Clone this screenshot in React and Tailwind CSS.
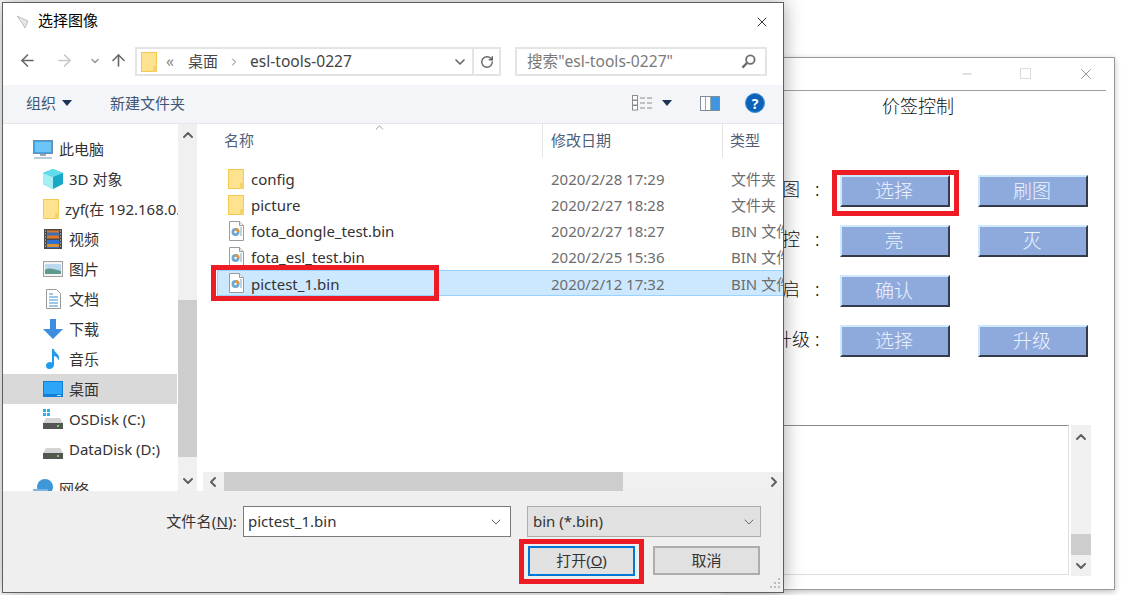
import React from 'react';
import { ChevronDown, ChevronUp, ChevronLeft, ChevronRight, ArrowLeft, ArrowRight, ArrowUp, RotateCw, X, Minus } from 'lucide-react';

const FolderIcon = ({ className = 'w-4 h-5' }) => (
  <svg viewBox="0 0 16 20" className={className}>
    <rect x="0.5" y="0.5" width="15" height="19" fill="#fde28f" stroke="#f3c94f" />
    <path d="M12 20v-6h4v6z" fill="#f6d06a" />
  </svg>
);

const BinIcon = () => (
  <svg viewBox="0 0 15 20" className="w-[15px] h-5 shrink-0">
    <path d="M.5.5h10l4 4v15H.5z" fill="#fff" stroke="#9a9a9a" />
    <path d="M10.5.5v4h4" fill="#eee" stroke="#9a9a9a" />
    <circle cx="6.5" cy="11" r="4" fill="#6fa8d0" />
    <path d="M6.5 7a4 4 0 0 1 4 4H6.5z" fill="#e0953f" />
    <circle cx="6.5" cy="11" r="1.2" fill="#fff" />
    <path d="M12 6v9" stroke="#7fa5bd" />
  </svg>
);

const PcIcon = () => (
  <svg viewBox="0 0 20 20" className="w-5 h-5">
    <rect x="0.5" y="1.5" width="19" height="13" fill="#3aa7ee" stroke="#6f8ea8" />
    <rect x="2" y="3" width="16" height="10" fill="#6cc5f7" />
    <path d="M7 15h6v2H7z" fill="#9ab" />
    <path d="M1 18h18v2H1z" fill="#bccbd8" />
  </svg>
);
const CubeIcon = () => (
  <svg viewBox="0 0 20 20" className="w-5 h-5">
    <path d="M10 0l10 4v11l-10 5L0 15V4z" fill="#18a9c9" />
    <path d="M10 0l10 4-10 4L0 4z" fill="#5fdcea" />
    <path d="M0 4l10 4v12L0 15z" fill="#a5eef3" />
  </svg>
);
const FilmIcon = () => (
  <svg viewBox="0 0 18 20" className="w-[18px] h-5">
    <rect width="18" height="20" fill="#4a4a4a" />
    <rect x="3" y="1.5" width="12" height="8" fill="#d9792e" />
    <rect x="3" y="3.5" width="12" height="3" fill="#3f6fb5" />
    <rect x="3" y="11" width="12" height="8" fill="#2f6fd0" />
    <rect x="3" y="15" width="12" height="3" fill="#d9902e" />
    <path d="M1 2h1M1 5h1M1 8h1M1 11h1M1 14h1M1 17h1M16 2h1M16 5h1M16 8h1M16 11h1M16 14h1M16 17h1" stroke="#ddd" />
  </svg>
);
const PictureIcon = () => (
  <svg viewBox="0 0 20 16" className="w-5 h-4">
    <rect x="0.5" y="0.5" width="19" height="15" fill="#f4f4f4" stroke="#a0a0a0" />
    <rect x="2" y="3" width="16" height="10" fill="#bcd8ee" />
    <path d="M2 9c4-3 8-1 16 1v3H2z" fill="#5f9a8c" />
  </svg>
);
const DocIcon = () => (
  <svg viewBox="0 0 15 20" className="w-[15px] h-5">
    <path d="M.5.5h10l4 4v15H.5z" fill="#fff" stroke="#9a9a9a" />
    <path d="M3 5h4M3 8h9M3 11h9M3 14h9M3 17h9" stroke="#3d8fd8" />
  </svg>
);
const DownloadIcon = () => (
  <svg viewBox="0 0 20 20" className="w-5 h-5">
    <path d="M7 0h6v10h7L10 20 0 10h7z" fill="#3d8ee0" />
  </svg>
);
const MusicIcon = () => (
  <svg viewBox="0 0 16 20" className="w-4 h-5">
    <path d="M7 0h2c0 4 5 4 5 9 0 1-.5 2-1 2.500 0-3-2-4-4-4.500V16c0 2-2 4-4.500 4S1 18.500 1 16.500 3 13 5 13c.8 0 1.500.2 2 .5z" fill="#1f9bee" />
  </svg>
);
const DesktopIcon = () => (
  <svg viewBox="0 0 20 16" className="w-5 h-4">
    <rect width="20" height="16" fill="#0f7fd8" />
    <rect x="1" y="1" width="18" height="12" fill="#2ea6f7" />
    <rect x="14" y="14" width="4" height="1" fill="#bfe3fb" />
  </svg>
);
const DriveIcon = ({ win }) => (
  <svg viewBox="0 0 20 20" className="w-5 h-5">
    {win && <path d="M0 0h3v3H0zM4 0h3v3H4zM0 4h3v3H0zM4 4h3v3H4z" fill="#21b5ee" />}
    <path d="M3 9h14l3 5H0z" fill="#d4d4d4" />
    <rect y="14" width="20" height="6" fill="#555" />
    <rect x="14" y="16" width="2" height="2" fill="#6fdc5a" />
  </svg>
);
const NetworkIcon = () => (
  <svg viewBox="0 0 20 20" className="w-5 h-5">
    <circle cx="12" cy="8" r="8" fill="#3d97d8" />
    <rect y="10" width="15" height="10" fill="#7cb6e0" />
  </svg>
);

const treeRows = [
  { label: '此电脑', icon: <PcIcon />, top: true },
  { label: '3D 对象', icon: <CubeIcon /> },
  { label: 'zyf(在 192.168.0.1)', icon: <FolderIcon /> },
  { label: '视频', icon: <FilmIcon /> },
  { label: '图片', icon: <PictureIcon /> },
  { label: '文档', icon: <DocIcon /> },
  { label: '下载', icon: <DownloadIcon /> },
  { label: '音乐', icon: <MusicIcon /> },
  { label: '桌面', icon: <DesktopIcon />, active: true },
  { label: 'OSDisk (C:)', icon: <DriveIcon win /> },
  { label: 'DataDisk (D:)', icon: <DriveIcon /> },
];

const files = [
  { name: 'config', date: '2020/2/28 17:29', type: '文件夹', folder: true },
  { name: 'picture', date: '2020/2/27 18:28', type: '文件夹', folder: true },
  { name: 'fota_dongle_test.bin', date: '2020/2/27 18:27', type: 'BIN 文件' },
  { name: 'fota_esl_test.bin', date: '2020/2/25 15:36', type: 'BIN 文件' },
  { name: 'pictest_1.bin', date: '2020/2/12 17:32', type: 'BIN 文件', selected: true },
];

const panelRows = [
  { label: '刷图', left: '选择', right: '刷图', colon: 'w-[40px] pl-[15px]' },
  { label: '灯控', left: '亮', right: '灭', colon: 'w-[40px] pl-[15px]' },
  { label: '重启', left: '确认', colon: 'w-[40px] pl-[15px]' },
  { label: '固件升级', left: '选择', right: '升级', colon: 'w-[30px] pl-[5px]' },
];

function PanelButton({ children }) {
  return (
    <div className="w-[110px] h-[32px] flex items-center justify-center pb-[2px] pr-[2px] bg-[#8eaadc] border-t-2 border-l-2 border-t-[#cfe9fb] border-l-[#cfe9fb] border-r-2 border-b-2 border-r-[#333b4c] border-b-[#333b4c] text-[19px] font-light text-[#edf3ff]">
      {children}
    </div>
  );
}

function ControlWindow() {
  return (
    <div className="absolute left-[721px] top-[57px] w-[394px] h-[533px] flex flex-col bg-white border border-[#9a9a9a] shadow-[0_2px_6px_rgba(0,0,0,0.25)] font-['Noto_Sans_CJK_SC',sans-serif] text-[#111]">
      <div className="h-[33px] shrink-0 relative border-b border-[#a0a0a0] mr-[8px] text-[#9a9a9a]">
        <Minus className="absolute left-[238px] top-[9px] w-[14px] h-[14px]" strokeWidth={1} />
        <div className="absolute left-[298px] top-[10px] w-[11px] h-[11px] border border-[#dcdcdc]" />
        <X className="absolute left-[355px] top-[7px] w-[18px] h-[18px] text-[#777]" strokeWidth={1} />
      </div>
      <div className="h-[31px] text-center text-[18px] leading-[29px] font-light">价签控制</div>
      <div className="mt-[53px] flex flex-col gap-[18px]">
        {panelRows.map((row) => (
          <div key={row.label + row.left} className="flex items-center">
            <div className="w-[118px] -mt-[6px] flex justify-end text-[18px] font-light">
              <span className="whitespace-nowrap">{row.label}</span>
              <span className={row.colon}>:</span>
            </div>
            <PanelButton>{row.left}</PanelButton>
            {row.right && (
              <div className="ml-[28px]">
                <PanelButton>{row.right}</PanelButton>
              </div>
            )}
          </div>
        ))}
      </div>
      <div className="mt-[68px] ml-[10px] flex gap-[2px]">
        <div className="w-[337px] h-[150px] bg-white border border-[#dedede] border-t-[#8a8a8a]" />
        <div className="w-[20px] h-[151px] bg-[#f0f0f0] flex flex-col items-center text-[#606060]">
          <ChevronUp className="w-4 h-5 mt-[2px]" strokeWidth={3} />
          <div className="w-full h-[21px] mt-[87px] bg-[#cdcdcd]" />
          <ChevronDown className="w-4 h-5 mt-[1px]" strokeWidth={3} />
        </div>
      </div>
    </div>
  );
}

function AddressBar() {
  return (
    <div className="h-[44px] shrink-0 flex items-start pt-[6px] text-[#444]">
      <ArrowLeft className="ml-[15px] mt-[4px] w-[19px] h-[19px] text-[#666]" strokeWidth={2} />
      <ArrowRight className="ml-[18px] mt-[4px] w-[19px] h-[19px] text-[#c8c8c8]" strokeWidth={2} />
      <ChevronDown className="ml-[15px] mt-[8px] w-3 h-3 text-[#999]" strokeWidth={3} />
      <ArrowUp className="ml-[8px] mt-[4px] w-[19px] h-[19px] text-[#666]" strokeWidth={2} />
      <div className="ml-[7px] w-[366px] h-[29px] flex items-center border-2 border-[#e4e4e4] text-[15.6px]">
        <div className="ml-[4px] flex">
          <FolderIcon />
        </div>
        <span className="ml-[9px] text-[#888]">«</span>
        <span className="ml-[14px] text-[15px]">桌面</span>
        <ChevronRight className="ml-[10px] w-3 h-3 text-[#777]" strokeWidth={2} />
        <span className="ml-[10px] whitespace-nowrap">esl-tools-0227</span>
        <ChevronDown className="ml-auto mr-[4px] w-4 h-4 text-[#666]" strokeWidth={2.5} />
        <div className="w-[27px] h-full flex items-center justify-center border-l-2 border-[#e4e4e4]">
          <RotateCw className="w-[14px] h-[14px] text-[#666]" strokeWidth={2.5} />
        </div>
      </div>
      <div className="ml-[14px] w-[252px] h-[29px] flex items-center border-2 border-[#e4e4e4] pl-[10px] text-[15.6px] text-[#7a7a7a]">
        <span className="whitespace-nowrap">搜索"esl-tools-0227"</span>
        <svg viewBox="0 0 16 16" className="ml-auto mr-[9px] w-[15px] h-[15px]" fill="none" stroke="#6e6e6e" strokeWidth="2">
          <circle cx="10" cy="6" r="4.5" />
          <path d="M6.5 9.5L1.5 14.5" strokeWidth="2.5" />
        </svg>
      </div>
    </div>
  );
}

function Toolbar() {
  return (
    <div className="h-[39px] shrink-0 flex items-center pb-[2px] bg-[#f3f5f8] border-b border-[#e6e6e6] text-[15px] text-[#3f5674]">
      <span className="ml-[23px]">组织</span>
      <div className="ml-[6px] w-0 h-0 border-x-[5px] border-x-transparent border-t-[6px] border-t-[#1c3557]" />
      <span className="ml-[38px]">新建文件夹</span>
      <svg viewBox="0 0 21 16" className="ml-auto w-[21px] h-4" stroke="#8c8c8c">
        <rect x="0.5" y="0.5" width="5" height="4.5" fill="#fff" />
        <rect x="0.5" y="5.5" width="5" height="4.5" fill="#fff" />
        <rect x="0.5" y="10.5" width="5" height="4.5" fill="#fff" />
        <path d="M8 3h5M15 3h5M8 8h5M15 8h5M8 13h5M15 13h5" />
      </svg>
      <div className="ml-[9px] w-0 h-0 border-x-[5px] border-x-transparent border-t-[6px] border-t-[#1c3557]" />
      <div className="ml-[28px] w-5 h-[15px] flex border border-[#7f8c99] bg-white">
        <div className="flex-1 border-r border-[#9aa]" />
        <div className="flex-1 border-r border-[#9aa]" />
        <div className="w-[8px] bg-[#3f95e0]" />
      </div>
      <div className="ml-[25px] mr-[18px] w-5 h-5 rounded-full bg-[#0a63b9] border border-[#3f8fd8] flex items-center justify-center text-[14px] font-bold text-white">?</div>
    </div>
  );
}

function Sidebar() {
  return (
    <div className="w-[175px] shrink-0 pt-[10px] overflow-hidden text-[15px] text-[#333]">
      {treeRows.map((row) => (
        <div key={row.label} className={`h-[30px] flex items-center ${row.active ? 'bg-[#d9d9d9] mr-px' : ''}`}>
          <div className={`w-5 flex justify-center ${row.top ? 'ml-[30px]' : 'ml-[40px]'}`}>{row.icon}</div>
          <span className="ml-[6px] whitespace-nowrap">{row.label}</span>
        </div>
      ))}
      <div className="h-[30px] mt-[10px] flex items-center">
        <div className="ml-[30px] w-5 flex justify-center">
          <NetworkIcon />
        </div>
        <span className="ml-[6px]">网络</span>
      </div>
    </div>
  );
}

function SideScrollbar() {
  return (
    <div className="w-[19px] shrink-0 bg-[#f0f0f0] flex flex-col items-center text-[#606060]">
      <ChevronUp className="w-4 h-4 mt-[3px]" strokeWidth={3} />
      <div className="w-full h-[157px] mt-[157px] bg-[#cdcdcd]" />
      <ChevronDown className="w-4 h-4 mt-[16px]" strokeWidth={3} />
    </div>
  );
}

function FileList() {
  return (
    <div className="ml-[6px] flex-1 min-w-0 flex flex-col overflow-hidden">
      <div className="h-[34px] shrink-0 flex relative text-[15px] text-[#4f6078]">
        <ChevronUp className="absolute left-[170px] -top-[3px] w-[13px] h-[13px] text-[#888]" strokeWidth={1.5} />
        <div className="w-[339px] pl-[21px] pt-[5px]">名称</div>
        <div className="w-[180px] pl-[8px] pt-[5px] border-l border-[#e5e5e5]">修改日期</div>
        <div className="pl-[7px] pt-[5px] border-l border-[#e5e5e5] whitespace-nowrap">类型</div>
      </div>
      <div className="flex-1 pt-[8px] pl-[14px] text-[15px]">
        {files.map((file) => (
          <div
            key={file.name}
            className={`h-[26px] w-[620px] flex items-center border ${file.selected ? 'bg-[#cce8ff] border-[#99d1ff]' : 'border-transparent'}`}
          >
            <div className="ml-[10px] w-4 flex justify-center">{file.folder ? <FolderIcon /> : <BinIcon />}</div>
            <div className={`flex items-center ${file.selected ? 'mt-[2px]' : ''}`}>
              <span className="ml-[7px] w-[300px] text-[#333] whitespace-nowrap">{file.name}</span>
              <span className="w-[180px] text-[#6d6d6d] whitespace-nowrap">{file.date}</span>
              <span className="text-[#6d6d6d] whitespace-nowrap">{file.type}</span>
            </div>
          </div>
        ))}
      </div>
      <div className="h-[19px] shrink-0 flex items-center bg-[#f0f0f0] text-[#606060]">
        <ChevronLeft className="w-4 h-4 ml-[2px]" strokeWidth={3} />
        <div className="ml-[3px] w-[399px] h-full bg-[#cdcdcd]" />
        <ChevronRight className="ml-auto w-4 h-4 mr-[1px]" strokeWidth={3} />
      </div>
    </div>
  );
}

function Footer() {
  return (
    <div className="flex-1 bg-[#efefef] relative text-[15px] text-[#333]">
      <div className="flex items-center pt-[15px]">
        <div className="w-[234px] text-right whitespace-nowrap tracking-[0.2px]">
          文件名(<span className="underline">N</span>):
        </div>
        <div className="ml-[6px] w-[268px] h-[31px] flex items-center justify-between bg-white border border-[#7a7a7a] pl-[4px] pr-[6px]">
          <span>pictest_1.bin</span>
          <ChevronDown className="w-4 h-4 text-[#666]" strokeWidth={1.5} />
        </div>
        <div className="ml-[16px] w-[234px] h-[31px] flex items-center justify-between bg-[#e1e1e1] border border-[#adadad] pl-[5px] pr-[3px]">
          <span>bin (*.bin)</span>
          <ChevronDown className="w-4 h-4 text-[#666]" strokeWidth={1.5} />
        </div>
      </div>
      <div className="flex justify-end gap-[18px] pr-[23px] mt-[9px]">
        <div className="w-[107px] h-[30px] flex items-center justify-center pb-[2px] bg-[#e1e1e1] border-2 border-[#0078d7]">
          打开(<span className="underline">O</span>)
        </div>
        <div className="w-[107px] h-[29px] flex items-center justify-center pb-[1px] bg-[#e1e1e1] border-2 border-[#adadad]">取消</div>
      </div>
      <svg viewBox="0 0 12 12" className="absolute right-[2px] bottom-[2px] w-3 h-3" fill="#bdbdbd">
        <path d="M9 0h2v2H9zM5 4h2v2H5zM9 4h2v2H9zM1 8h2v2H1zM5 8h2v2H5zM9 8h2v2H9z" />
      </svg>
    </div>
  );
}

function FileDialog() {
  return (
    <div className="absolute left-[2px] top-[2px] w-[782px] h-[591px] flex flex-col bg-white border border-[#5f5f5f] shadow-[0_0_18px_rgba(0,0,0,0.35)] font-['Noto_Sans','Noto_Sans_CJK_SC',sans-serif]">
      <div className="h-[38px] shrink-0 flex items-center">
        <svg viewBox="0 0 12 14" className="ml-[14px] w-3 h-[14px]">
          <path d="M0 1l11 5-3 7-3-5z" fill="#e6e6e6" stroke="#aaa" strokeWidth="0.7" />
        </svg>
        <span className="ml-[9px] -mt-[3px] text-[15px] text-black">选择图像</span>
        <X className="ml-auto mr-[13px] w-[16px] h-[16px] text-black" strokeWidth={1.2} />
      </div>
      <AddressBar />
      <Toolbar />
      <div className="h-[367px] shrink-0 flex overflow-hidden">
        <Sidebar />
        <SideScrollbar />
        <FileList />
      </div>
      <Footer />
    </div>
  );
}

export default function App() {
  return (
    <div className="relative w-[1121px] h-[595px] overflow-hidden bg-white">
      <ControlWindow />
      <FileDialog />
      {/* red annotation boxes drawn over the screenshot */}
      <div className="absolute left-[211px] top-[265px] w-[228px] h-[36px] border-[5px] border-[#ed1c24]" />
      <div className="absolute left-[832px] top-[170px] w-[127px] h-[46px] border-[5px] border-[#ed1c24]" />
      <div className="absolute left-[519px] top-[539px] w-[125px] h-[45px] border-[5px] border-[#ed1c24]" />
    </div>
  );
}
